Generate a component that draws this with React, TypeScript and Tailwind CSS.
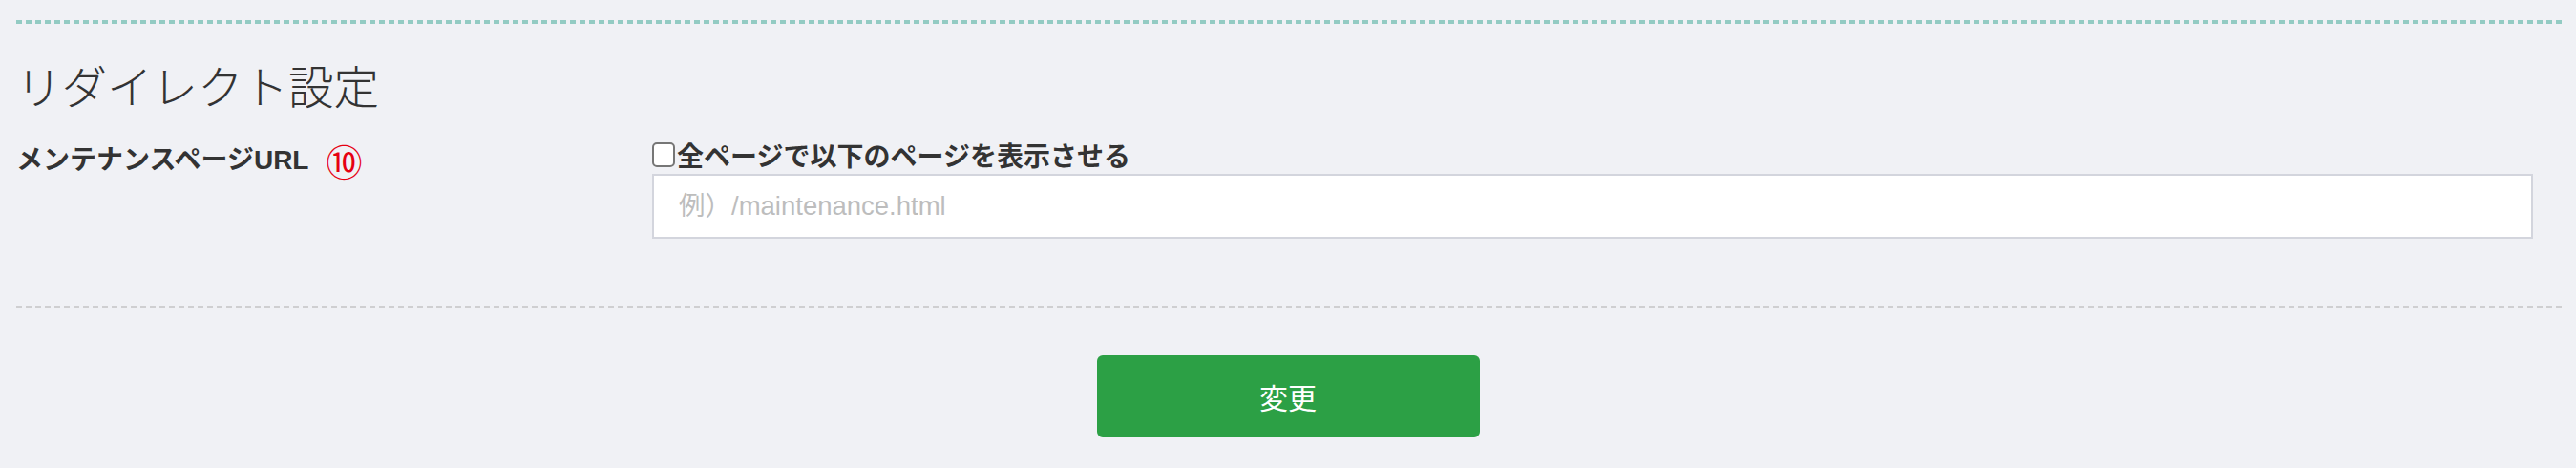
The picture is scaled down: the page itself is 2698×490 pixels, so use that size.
export default function App() {
  return (
    <main className="min-h-[490px] bg-[#f0f1f5] pl-[17px] pr-[14px] pt-[21px] font-['Liberation_Sans','Noto_Sans_CJK_JP',sans-serif] text-[#333]">
      <div className="h-[4px] bg-[repeating-linear-gradient(90deg,#93cbc3_0_6px,transparent_6px_10px)]" />

      <h2 className="mt-[34px] h-[60px] text-[47.5px] leading-[60px] font-light font-['Noto_Sans_CJK_JP',sans-serif]">
        リダイレクト設定
      </h2>

      <section className="mt-[26px] grid grid-cols-[666px_minmax(0,1fr)]">
        <div className="flex h-[40px] items-center pt-[6px]">
          <span className="text-[28px] font-bold leading-[34px]">
            メンテナンスページURL
          </span>
          <span className="ml-[18px] text-[38px] leading-[34px] text-[#e60012] font-['Noto_Sans_CJK_JP',sans-serif]">
            ⑩
          </span>
        </div>

        <div className="pr-[31px]">
          <label className="flex h-[34px] items-center gap-[2px]">
            <input
              type="checkbox"
              className="h-[26px] w-[24px] appearance-none rounded-[5px] border-2 border-[#767676] bg-white"
            />
            <span className="text-[28px] font-bold font-['Noto_Sans_CJK_JP',sans-serif] leading-[34px]">
              全ページで以下のページを表示させる
            </span>
          </label>
          <input
            type="text"
            placeholder="例）/maintenance.html"
            className="mt-[3px] block h-[68px] w-full border-2 border-[#d3d5dd] bg-white px-[26px] text-[27.5px] placeholder:text-[#bdbdbd] outline-none"
          />
        </div>
      </section>

      <div className="mt-[70px] h-[2px] bg-[repeating-linear-gradient(90deg,#cfcfd1_0_6px,transparent_6px_10px)]" />

      <div className="mt-[50px] flex justify-center pr-[3px]">
        <button className="h-[86px] w-[401px] rounded-[6px] bg-[#2ca045] text-[30px] text-white font-['Noto_Sans_CJK_JP',sans-serif]">
          変更
        </button>
      </div>
    </main>
  );
}
